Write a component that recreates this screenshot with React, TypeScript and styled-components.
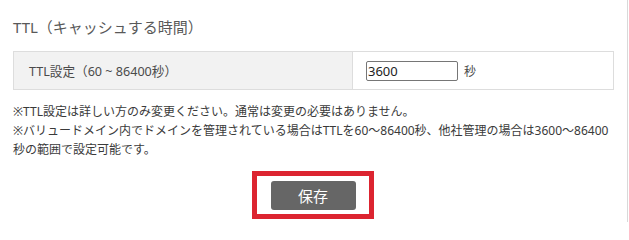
import { useState } from "react";
import styled, { createGlobalStyle } from "styled-components";

const GlobalStyle = createGlobalStyle`
	html, body {
		margin: 0;
		padding: 0;
		background: #ffffff;
	}

	body {
		font-family: "Noto Sans", "Noto Sans CJK JP", sans-serif;
		color: #333333;
	}
`;

const App = () => {
	const [ttl, setTtl] = useState("3600");

	return (
		<>
			<GlobalStyle />
			<Panel>
				<Title>TTL（キャッシュする時間）</Title>
				<SettingTable>
					<LabelCell>TTL設定（60 ~ 86400秒）</LabelCell>
					<ValueCell>
						<TtlInput type="text" value={ttl} onChange={(e) => setTtl(e.target.value)} />
						<Unit>秒</Unit>
					</ValueCell>
				</SettingTable>
				<Notes>
					<p>※TTL設定は詳しい方のみ変更ください。通常は変更の必要はありません。</p>
					<p>
						※バリュードメイン内でドメインを管理されている場合はTTLを60～86400秒、他社管理の場合は3600～86400秒の範囲で設定可能です。
					</p>
				</Notes>
				<ButtonRow>
					<Highlight>
						<SaveButton type="button">保存</SaveButton>
					</Highlight>
				</ButtonRow>
			</Panel>
		</>
	);
};

export default App;

const Panel = styled.div`
	box-sizing: border-box;
	width: 628px;
	height: 222px;
	padding: 17px 13px 0 13px;
	border-right: 1px solid #d9d9d9;
`;

const Title = styled.h2`
	margin: 0;
	font-size: 15px;
	line-height: 20px;
	font-weight: normal;
	color: #595959;
`;

const SettingTable = styled.div`
	display: flex;
	margin-top: 14px;
	height: 39px;
	box-sizing: border-box;
	border: 1px solid #dddddd;
`;

const LabelCell = styled.div`
	display: flex;
	align-items: center;
	width: 339px;
	padding-left: 15px;
	box-sizing: border-box;
	background: #f2f2f2;
	border-right: 1px solid #dddddd;
	font-size: 12.6px;
	color: #4a4a4a;
`;

const ValueCell = styled.div`
	flex: 1;
	display: flex;
	align-items: center;
	gap: 6px;
	padding-left: 13px;
`;

const TtlInput = styled.input`
	box-sizing: border-box;
	width: 92px;
	height: 20px;
	margin: 0;
	padding: 0 1px;
	border: 1px solid #767676;
	border-radius: 2px;
	font-family: "Noto Sans", "Noto Sans CJK JP", sans-serif;
	font-size: 13px;
	color: #222222;
	outline: none;
`;

const Unit = styled.span`
	font-size: 12px;
	color: #4a4a4a;
`;

const Notes = styled.div`
	margin-top: 12px;
	font-size: 12px;
	line-height: 19px;
	color: #3a3a3a;

	p {
		margin: 0;
	}
`;

const ButtonRow = styled.div`
	display: flex;
	justify-content: center;
	margin-top: 12px;
	padding-right: 2px;
`;

const Highlight = styled.div`
	display: flex;
	padding: 5px 13px 4px 14px;
	border: 5px solid #dc2430;
`;

const SaveButton = styled.button`
	width: 85px;
	height: 29px;
	padding: 0;
	border: 0;
	border-radius: 3px;
	background: #666666;
	color: #ffffff;
	font-family: "Noto Sans", "Noto Sans CJK JP", sans-serif;
	font-size: 15px;
	cursor: pointer;
`;
